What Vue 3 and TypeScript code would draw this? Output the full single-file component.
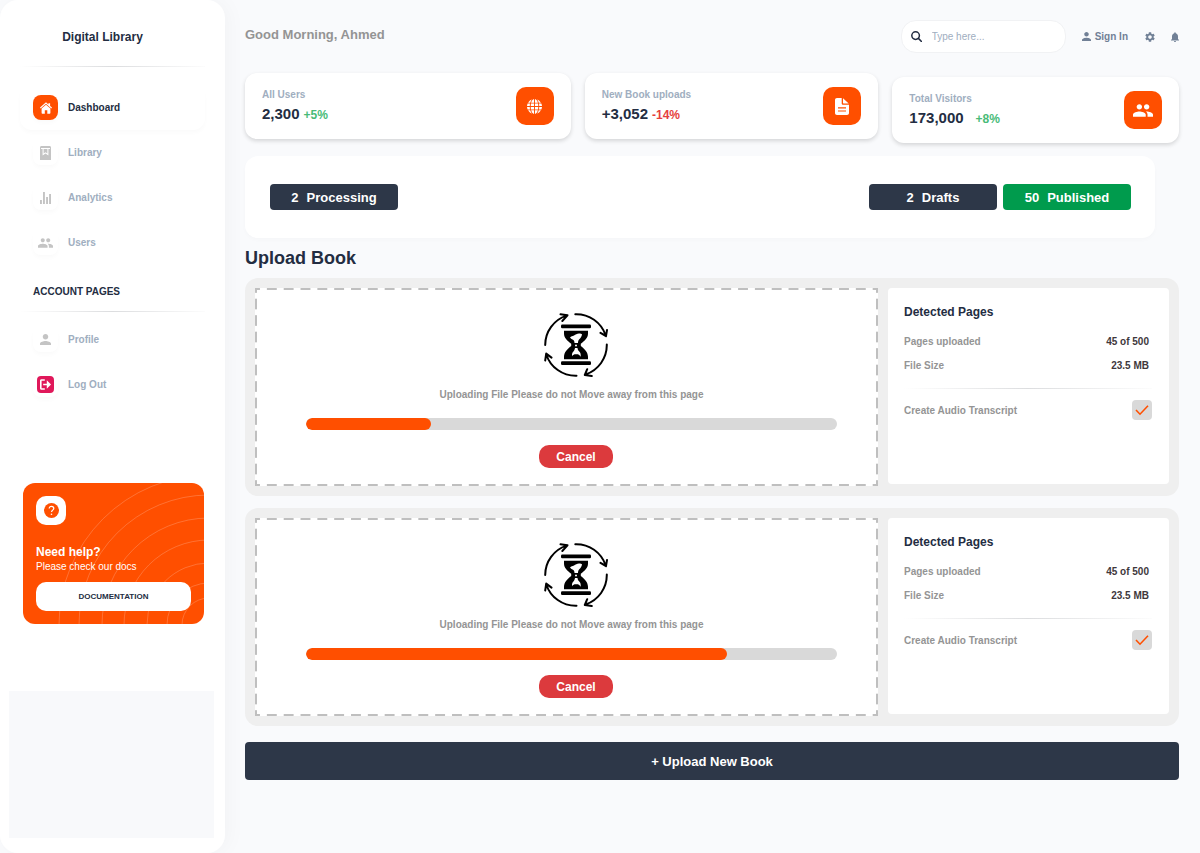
<script setup lang="ts">
import { reactive } from 'vue'

interface Icon { box: string; d: string; w: number; h: number }
interface NavItem { label: string; icon: Icon; active?: boolean; tone?: string }
interface Stat { label: string; value: string; delta: string; up: boolean; spaced?: boolean; icon: Icon }
interface Upload { id: number; percent: number; pages: string; size: string; audio: boolean }

const groupPath =
  'M16 11c1.66 0 2.99-1.34 2.99-3S17.66 5 16 5s-3 1.34-3 3 1.34 3 3 3zM8 11c1.66 0 2.99-1.34 2.99-3S9.66 5 8 5 5 6.34 5 8s1.34 3 3 3zM8 13c-2.33 0-7 1.17-7 3.5V19h14v-2.5C15 14.17 10.33 13 8 13zM16 13c-.29 0-.62.02-.97.05 1.16.84 1.97 1.97 1.97 3.45V19h6v-2.5c0-2.33-4.67-3.5-7-3.5z'
const personPath =
  'M12 12c2.21 0 4-1.79 4-4s-1.79-4-4-4-4 1.79-4 4 1.79 4 4 4zM12 14c-2.67 0-8 1.34-8 4v2h16v-2c0-2.66-5.33-4-8-4z'

const icons = {
  home: {
    box: '0 0 12 12', w: 12, h: 12,
    d: 'M6 .2 8.4 2.4V1.2h1.7v2.7L12 5.6l-.7.8L6 1.7.7 6.4 0 5.6zM6 2.7l4.4 3.9v4.1c0 .6-.4 1-1 1H7.3V8.3H4.8v3.4H2.6c-.6 0-1-.4-1-1V6.6z',
  },
  book: {
    box: '0 0 11 14', w: 11, h: 14,
    d: 'M1.5 0h8C10.400 0 11 .6 11 1.500V14H0V1.500C0 .6.6 0 1.500 0zM1 2v1h9V2zM2.600 3v6.400l2.900-2 2.900 2V3h-1v4.600L5.500 6.200 3.600 7.600V3z',
  },
  chart: {
    box: '0 0 11 12', w: 11, h: 12,
    d: 'M0 8h1.900v4H0zM3 0h1.900v12H3zM6.100 5H8v7H6.100zM9.100 2H11v10H9.100z',
  },
  group: { box: '1 5 22 14', w: 15, h: 10, d: groupPath },
  groupLarge: { box: '1 5 22 14', w: 20, h: 13, d: groupPath },
  person: { box: '4 4 16 16', w: 11, h: 11, d: personPath },
  personSmall: { box: '4 4 16 16', w: 9, h: 9, d: personPath },
  logout: {
    box: '0 0 17 17', w: 17, h: 17,
    d: 'M4 0h9a4 4 0 0 1 4 4v9a4 4 0 0 1-4 4H4a4 4 0 0 1-4-4V4a4 4 0 0 1 4-4zM4.500 3.300C3.600 3.300 3 3.900 3 4.800v7.400c0 .9.600 1.500 1.500 1.500h3.300v-1.500H4.600V4.800h3.200V3.300zM9.800 4.300v3.400H6.200v1.600h3.600v3.400l4.200-4.200z',
  },
  globe: {
    box: '0 0 16 16', w: 15, h: 15,
    d: 'M7.500 0C6 .4 5 1.900 4.400 3.900h3.100zM8.500 0v3.900h3.100C11 1.900 10 .4 8.500 0zM5.200.5C3.500 1.100 2.100 2.300 1.200 3.900h2.200C3.800 2.500 4.400 1.300 5.200.5zM10.800.5c.8.800 1.400 2 1.800 3.400h2.200C13.900 2.300 12.500 1.100 10.800.5zM.7 4.900C.3 5.700.1 6.600 0 7.500h3c0-.9.100-1.800.2-2.600zM4.200 4.900C4.100 5.700 4 6.600 4 7.500h3.500V4.900zM8.500 4.900v2.600H12c0-.9-.1-1.800-.2-2.600zM12.800 4.900c.1.800.2 1.700.2 2.600h3c-.1-.9-.3-1.800-.7-2.600zM0 8.500c.1.900.3 1.800.7 2.600h2.500C3.100 10.300 3 9.400 3 8.500zM4 8.500c0 .9.100 1.800.2 2.600h3.300V8.500zM8.500 8.500v2.600h3.300c.1-.8.200-1.700.2-2.600zM13 8.500c0 .9-.1 1.800-.2 2.600h2.500c.4-.8.600-1.700.7-2.600zM1.200 12.100c.9 1.600 2.300 2.800 4 3.400-.8-.8-1.400-2-1.800-3.400zM4.400 12.100C5 14.100 6 15.600 7.500 16v-3.900zM8.500 12.100V16c1.500-.4 2.500-1.900 3.100-3.900zM12.600 12.100c-.4 1.400-1 2.600-1.800 3.400 1.700-.6 3.100-1.800 4-3.400z',
  },
  file: {
    box: '0 0 14 17', w: 14, h: 17,
    d: 'M2 0h4.700v5.200c0 1 .6 1.600 1.600 1.600H14V15c0 1.200-.8 2-2 2H2c-1.200 0-2-.8-2-2V2C0 .8.800 0 2 0zM8 .3 13.700 5.600H8.500C8.200 5.600 8 5.400 8 5.100zM3 9.300v1.100h8V9.300zM3 12.500v1.100h8v-1.100z',
  },
  gear: {
    box: '2 2 20 20', w: 10, h: 10,
    d: 'M19.140 12.940c.04-.3.060-.61.060-.94 0-.32-.02-.64-.07-.94l2.030-1.580c.18-.14.230-.41.120-.61l-1.920-3.320c-.12-.22-.37-.29-.59-.22l-2.390.96c-.5-.38-1.030-.7-1.620-.94l-.36-2.540c-.04-.24-.24-.41-.48-.41h-3.840c-.24 0-.43.17-.47.41l-.36 2.540c-.59.24-1.130.57-1.620.94l-2.390-.96c-.22-.08-.47 0-.59.22L2.740 8.870c-.12.21-.08.47.12.61l2.030 1.580c-.05.3-.09.63-.09.94s.02.64.07.94l-2.030 1.580c-.18.14-.23.41-.12.61l1.920 3.320c.12.22.37.29.59.22l2.390-.96c.5.38 1.030.7 1.620.94l.36 2.540c.05.24.24.41.48.41h3.840c.24 0 .44-.17.47-.41l.36-2.540c.59-.24 1.130-.56 1.620-.94l2.390.96c.22.08.47 0 .59-.22l1.920-3.320c.12-.22.070-.47-.12-.61zM12 15.600c-1.980 0-3.600-1.620-3.600-3.600s1.620-3.600 3.600-3.600 3.600 1.620 3.600 3.600-1.620 3.600-3.600 3.600z',
  },
  bell: {
    box: '4 2 16 20', w: 8, h: 10,
    d: 'M12 22c1.100 0 2-.9 2-2h-4c0 1.100.89 2 2 2zM18 16v-5c0-3.070-1.640-5.640-4.500-6.320V4c0-.83-.67-1.500-1.500-1.500s-1.500.67-1.500 1.500v.68C7.630 5.360 6 7.920 6 11v5l-2 2v1h16v-1z',
  },
} satisfies Record<string, Icon>

const mainNav: NavItem[] = [
  { label: 'Dashboard', icon: icons.home, active: true },
  { label: 'Library', icon: icons.book },
  { label: 'Analytics', icon: icons.chart },
  { label: 'Users', icon: icons.group },
]
const accountNav: NavItem[] = [
  { label: 'Profile', icon: icons.person },
  { label: 'Log Out', icon: icons.logout, tone: 'danger' },
]
const stats: Stat[] = [
  { label: 'All Users', value: '2,300', delta: '+5%', up: true, icon: icons.globe },
  { label: 'New Book uploads', value: '+3,052', delta: '-14%', up: false, icon: icons.file },
  { label: 'Total Visitors', value: '173,000', delta: '+8%', up: true, spaced: true, icon: icons.groupLarge },
]
const uploads = reactive<Upload[]>([
  { id: 1, percent: 23.6, pages: '45 of 500', size: '23.5 MB', audio: true },
  { id: 2, percent: 79.3, pages: '45 of 500', size: '23.5 MB', audio: true },
])
const rings = [150, 130, 107, 85, 62, 42, 27]
</script>

<template>
  <div class="app">
    <aside class="sidebar">
      <div class="brand">Digital Library</div>
      <hr class="rule" />
      <nav class="nav" aria-label="Main">
        <a v-for="n in mainNav" :key="n.label" href="#" class="nav-item" :class="{ active: n.active }">
          <span class="nav-icon">
            <svg :width="n.icon.w" :height="n.icon.h" :viewBox="n.icon.box" aria-hidden="true"><path :d="n.icon.d" /></svg>
          </span>
          {{ n.label }}
        </a>
      </nav>
      <h2 class="nav-heading">ACCOUNT PAGES</h2>
      <hr class="rule" />
      <nav class="nav account" aria-label="Account">
        <a v-for="n in accountNav" :key="n.label" href="#" class="nav-item" :class="n.tone">
          <span class="nav-icon">
            <svg :width="n.icon.w" :height="n.icon.h" :viewBox="n.icon.box" aria-hidden="true"><path :d="n.icon.d" /></svg>
          </span>
          {{ n.label }}
        </a>
      </nav>

      <section class="help">
        <svg class="rings" viewBox="0 0 181 141" preserveAspectRatio="xMaxYMax slice" aria-hidden="true">
          <circle v-for="r in rings" :key="r" cx="186" cy="142" :r="r" />
        </svg>
        <div class="help-body">
          <span class="help-icon">
            <svg width="15" height="15" viewBox="0 0 15 15" aria-hidden="true">
              <circle cx="7.5" cy="7.500" r="7.500" fill="#ff4f00" />
              <path d="M5.200 5.600C5.200 4.200 6.200 3.300 7.500 3.300s2.300.9 2.300 2.100c0 1.700-2.200 1.800-2.200 3.500" fill="none" stroke="#fff" stroke-width="1.200" />
              <circle cx="7.500" cy="11.200" r=".8" fill="#fff" />
            </svg>
          </span>
          <h3>Need help?</h3>
          <p>Please check our docs</p>
          <a href="#" class="docs">DOCUMENTATION</a>
        </div>
      </section>

      <div class="side-panel"></div>
    </aside>

    <main class="main">
      <header class="top">
        <h1 class="greeting">Good Morning, Ahmed</h1>
        <label class="search">
          <svg width="11" height="11" viewBox="0 0 11 11" aria-hidden="true">
            <circle cx="4.600" cy="4.600" r="3.800" /><path d="M7.400 7.400 10.500 10.500" />
          </svg>
          <input type="search" placeholder="Type here..." aria-label="Search" />
        </label>
        <a href="#" class="sign-in">
          <svg :width="icons.personSmall.w" :height="icons.personSmall.h" :viewBox="icons.personSmall.box" aria-hidden="true"><path :d="icons.personSmall.d" /></svg>
          Sign In
        </a>
        <button class="icon-button" type="button" aria-label="Settings">
          <svg :width="icons.gear.w" :height="icons.gear.h" :viewBox="icons.gear.box"><path :d="icons.gear.d" /></svg>
        </button>
        <button class="icon-button" type="button" aria-label="Notifications">
          <svg :width="icons.bell.w" :height="icons.bell.h" :viewBox="icons.bell.box"><path :d="icons.bell.d" /></svg>
        </button>
      </header>

      <section class="stats">
        <article v-for="s in stats" :key="s.label" class="stat" :class="{ spaced: s.spaced }">
          <div>
            <div class="stat-label">{{ s.label }}</div>
            <div class="stat-line">
              <span class="stat-value">{{ s.value }}</span>
              <span class="delta" :class="{ down: !s.up }">{{ s.delta }}</span>
            </div>
          </div>
          <span class="stat-icon">
            <svg :width="s.icon.w" :height="s.icon.h" :viewBox="s.icon.box" aria-hidden="true"><path :d="s.icon.d" /></svg>
          </span>
        </article>
      </section>

      <section class="status">
        <button type="button" class="pill"><span>2</span><span>Processing</span></button>
        <div class="status-group">
          <button type="button" class="pill"><span>2</span><span>Drafts</span></button>
          <button type="button" class="pill green"><span>50</span><span>Published</span></button>
        </div>
      </section>

      <h2 class="section-title">Upload Book</h2>

      <section class="uploads">
        <article v-for="u in uploads" :key="u.id" class="upload">
          <div class="drop">
            <svg class="hourglass" width="64" height="64" viewBox="0 0 64 64" aria-hidden="true">
              <g fill="none" stroke="#000" stroke-width="2" stroke-linecap="round" stroke-linejoin="round">
                <path d="M1.200 32A31 31 0 0 1 22.500 2.600M16.500 1.300 23.500 2.300 18.300 8" />
                <path d="M31.300 1.200A31 31 0 0 1 61.700 22.500M56.500 19.800 62 23.200 63 17" />
                <path d="M62.800 31.500A31 31 0 0 1 41.500 61.500M43.200 56.200 40.800 62 47.800 63" />
                <path d="M32.500 62.800A31 31 0 0 1 2.200 41.200M1.200 47.500 2.200 40.600 7.500 44.600" />
              </g>
              <rect x="17" y="11.500" width="30" height="3.800" rx="1.200" />
              <rect x="17" y="48.300" width="30" height="3.700" rx="1.200" />
              <path d="M20 17.700h24v2.800c0 4.600-3.600 7.500-7.200 10.200v2.300C40.400 35.700 44 39.300 44 43.800v2.400H20v-2.400c0-4.500 3.600-8.100 7.200-10.800v-2.300C23.600 28 20 25.100 20 20.500z" />
              <path d="M26 24.500c1-1.200 2.600-1.200 4-2 1.500-1 3-2 5-2 1.500 0 2.500.3 3 .8-.2 2.200-1.300 3.700-2.700 5-1 1-1.300 2.200-1.300 3.700h-3.500c0-1.800-.6-2.600-2-3.400-.9-.5-1.900-1.200-2.500-2.100zM31 35h2.500c.2 1.700.9 2.800 2.200 4 .8.800 1 1.800 1 3.400v1.400c-.8-1.200-1.600-2-2.700-2.500h-3.500c-1.100.5-1.700 1-2.400 2l-.1-1.500c.1-1.600.5-2.200 1.200-3 1-1.100 1.600-2.200 1.800-3.800z" fill="#fff" />
              <circle cx="32" cy="32.500" r="1" fill="#fff" />
            </svg>
            <div class="progress-area">
              <p>Uploading File Please do not Move away from this page</p>
              <div class="track" role="progressbar" aria-label="Upload progress" :aria-valuenow="u.percent" aria-valuemin="0" aria-valuemax="100">
                <div class="fill" :style="{ width: u.percent + '%' }"></div>
              </div>
            </div>
            <button type="button" class="cancel">Cancel</button>
          </div>
          <div class="details">
            <h3>Detected Pages</h3>
            <dl>
              <div><dt>Pages uploaded</dt><dd>{{ u.pages }}</dd></div>
              <div><dt>File Size</dt><dd>{{ u.size }}</dd></div>
            </dl>
            <hr class="rule" />
            <label class="check-row" :for="'audio-' + u.id">
              Create Audio Transcript
              <span class="check">
                <input :id="'audio-' + u.id" v-model="u.audio" type="checkbox" />
                <svg v-if="u.audio" width="20" height="20" viewBox="0 0 20 20" aria-hidden="true"><path d="M4 10 8 14.200 16 5.700" /></svg>
              </span>
            </label>
          </div>
        </article>
      </section>

      <button type="button" class="upload-new">+ Upload New Book</button>
    </main>
  </div>
</template>

<style>
body {
  margin: 0;
  background: #f9fafc;
}
</style>

<style scoped>
* {
  box-sizing: border-box;
}
.app {
  display: grid;
  grid-template-columns: 225px minmax(0, 1fr);
  min-height: 100vh;
  font-family: "Liberation Sans", Arial, Helvetica, sans-serif;
  font-size: 10px;
  font-weight: 700;
  color: #232d42;
}
h1, h2, h3, p, dl, dd {
  margin: 0;
}
a {
  color: inherit;
  text-decoration: none;
}
button {
  border: 0;
  padding: 0;
  font: inherit;
  cursor: pointer;
}
svg {
  display: block;
  flex: none;
}
path {
  fill-rule: evenodd;
}
.rule {
  height: 1px;
  width: 100%;
  margin: 0;
  border: 0;
  background: linear-gradient(90deg, rgba(224, 225, 226, 0), #dcdddf 50%, rgba(224, 225, 226, 0.1));
}

.sidebar {
  display: flex;
  flex-direction: column;
  padding: 24px 20px 15px;
  background: #fff;
  border-radius: 18px;
  box-shadow: 4px 0 20px rgba(0, 0, 0, 0.03);
}
.brand {
  padding-right: 20px;
  margin-bottom: 16px;
  font-size: 12px;
  line-height: 26px;
  text-align: center;
}
.nav {
  display: flex;
  flex-direction: column;
  padding-top: 18px;
}
.nav.account {
  padding-top: 5px;
}
.nav-item {
  display: flex;
  align-items: center;
  gap: 10px;
  height: 45px;
  padding-left: 13px;
  border-radius: 12px;
  color: #a0aec0;
}
.nav-item.active {
  color: #232d42;
  box-shadow: 0 3px 4px rgba(0, 0, 0, 0.02);
}
.nav-icon {
  display: grid;
  place-items: center;
  width: 25px;
  height: 25px;
  border-radius: 8px;
  color: #c4c4c4;
  box-shadow: 0 3px 4px rgba(0, 0, 0, 0.02);
}
.nav-icon path, .stat-icon path, .sign-in path, .icon-button path {
  fill: currentColor;
}
.active .nav-icon {
  background: #ff4f00;
  color: #fff;
}
.danger .nav-icon {
  color: #e0185a;
}
.nav-heading {
  margin: 17px 0 9px;
  padding-left: 13px;
  font-size: 10px;
  line-height: 20px;
}
.help {
  position: relative;
  margin: 76px 1px 67px 3px;
  overflow: hidden;
  border-radius: 12px;
  background: #ff4f00;
  color: #fff;
}
.rings {
  position: absolute;
  inset: 0;
  width: 100%;
  height: 100%;
  fill: none;
  stroke: rgba(255, 255, 255, 0.2);
}
.help-body {
  position: relative;
  padding: 13px;
}
.help-icon {
  display: grid;
  place-items: center;
  width: 30px;
  height: 29px;
  margin-bottom: 19px;
  border-radius: 10px;
  background: #fff;
}
.help h3 {
  font-size: 12px;
  line-height: 16px;
}
.help p {
  font-weight: 400;
  line-height: 14px;
}
.docs {
  display: block;
  margin-top: 8px;
  border-radius: 10px;
  background: #fff;
  color: #232d42;
  font-size: 8px;
  line-height: 29px;
  text-align: center;
}
.side-panel {
  flex: 1;
  min-height: 147px;
  margin: 0 -9px 0 -11px;
  background: #f8f9fb;
}

.main {
  display: flex;
  flex-direction: column;
  padding: 20px 21px 20px 20px;
}
.top {
  display: flex;
  align-items: center;
  height: 33px;
  margin-bottom: 20px;
  color: #718096;
}
.greeting {
  flex: 1;
  align-self: flex-start;
  font-size: 13px;
  line-height: 30px;
  color: #949494;
}
.search {
  display: flex;
  align-items: center;
  gap: 10px;
  width: 165px;
  height: 33px;
  margin-right: 16px;
  padding: 0 9px;
  border: 1px solid #f1f2f4;
  border-radius: 15px;
  background: #fff;
}
.search svg {
  fill: none;
  stroke: #232d42;
  stroke-width: 1.5;
  stroke-linecap: round;
}
.search input {
  width: 100%;
  min-width: 0;
  padding: 0;
  border: 0;
  outline: 0;
  background: none;
  font: 400 10px "Liberation Sans", Arial, sans-serif;
  color: #232d42;
}
.search input::placeholder {
  color: #a0aec0;
}
.sign-in {
  display: flex;
  align-items: center;
  gap: 4px;
  margin-right: 17px;
}
.icon-button {
  background: none;
  color: inherit;
}
.icon-button + .icon-button {
  margin-left: 16px;
}

.stats {
  display: grid;
  grid-template-columns: 325fr 293fr 286fr;
  gap: 14px;
  min-height: 70px;
}
.stat {
  display: flex;
  justify-content: space-between;
  align-items: center;
  height: 66px;
  padding: 0 17px;
  border-radius: 12px;
  background: #fff;
  box-shadow: 0 2px 4px rgba(0, 0, 0, 0.15);
}
.stat.spaced {
  align-self: end;
}
.stat-label {
  line-height: 16px;
  color: #a0aec0;
}
.stat-line {
  display: flex;
  align-items: baseline;
  gap: 4px;
  line-height: 22px;
}
.spaced .stat-line {
  gap: 12px;
}
.stat-value {
  font-size: 15px;
}
.delta {
  font-size: 12px;
  color: #48bb78;
}
.delta.down {
  color: #e53e3e;
}
.stat-icon {
  display: grid;
  place-items: center;
  width: 38px;
  height: 38px;
  border-radius: 10px;
  background: #ff4f00;
  color: #fff;
}

.status {
  display: flex;
  justify-content: space-between;
  align-items: center;
  height: 82px;
  margin: 13px 24px 0 0;
  padding: 0 24px 0 25px;
  border-radius: 13px;
  background: #fff;
  box-shadow: 0 2px 4px rgba(0, 0, 0, 0.02);
}
.status-group {
  display: flex;
  gap: 6px;
}
.pill {
  display: flex;
  justify-content: center;
  align-items: center;
  gap: 8px;
  width: 128px;
  height: 26px;
  border-radius: 4px;
  background: #2d3748;
  color: #fff;
  font-size: 13px;
}
.pill.green {
  background: #009b4d;
}
.section-title {
  font-size: 18px;
  line-height: 40px;
}

.uploads {
  display: grid;
  gap: 12px;
}
.upload {
  display: grid;
  grid-template-columns: 623fr 281fr;
  gap: 10px;
  padding: 10px;
  border-radius: 13px;
  background: #efefef;
}
.drop {
  display: flex;
  flex-direction: column;
  align-items: center;
  padding: 25px 32px 18px 51px;
  background:
    linear-gradient(90deg, #bfbfbf 5px, transparent 5px 12px, #bfbfbf 12px) 0 0 / 17px 2px round no-repeat,
    linear-gradient(90deg, #bfbfbf 5px, transparent 5px 12px, #bfbfbf 12px) 0 100% / 17px 2px round no-repeat,
    linear-gradient(#bfbfbf 5px, transparent 5px 11px, #bfbfbf 11px) 0 0 / 2px 16px no-repeat round,
    linear-gradient(#bfbfbf 5px, transparent 5px 11px, #bfbfbf 11px) 100% 0 / 2px 16px no-repeat round,
    #fff;
}
.progress-area {
  width: 100%;
  padding-right: 9px;
}
.progress-area p {
  margin: 10px 0 15px;
  line-height: 16px;
  text-align: center;
  color: #949494;
}
.track {
  height: 12px;
  overflow: hidden;
  border-radius: 6px;
  background: #d9d9d9;
}
.fill {
  height: 100%;
  border-radius: 6px;
  background: #ff4f00;
}
.cancel {
  width: 74px;
  height: 23px;
  margin-top: 15px;
  border-radius: 10px;
  background: #dc3a3d;
  color: #fff;
  font-size: 12px;
}
.details {
  margin-bottom: 2px;
  padding: 14px 17px 14px 16px;
  border-radius: 4px;
  background: #fff;
  color: #949494;
}
.details h3 {
  margin-bottom: 8px;
  font-size: 12px;
  line-height: 20px;
  color: #232d42;
}
.details dl {
  padding-right: 3px;
  margin-bottom: 10px;
}
.details dl div {
  display: flex;
  justify-content: space-between;
  line-height: 24px;
}
.details dd {
  color: #40383c;
}
.check-row {
  display: flex;
  justify-content: space-between;
  align-items: center;
  margin-top: 11px;
}
.check {
  position: relative;
  width: 20px;
  height: 20px;
}
.check input {
  display: block;
  appearance: none;
  width: 20px;
  height: 20px;
  margin: 0;
  border-radius: 4px;
  background: #d9d9d9;
}
.check svg {
  position: absolute;
  inset: 0;
  pointer-events: none;
  fill: none;
  stroke: #ff4f00;
  stroke-width: 1.6;
}
.upload-new {
  height: 38px;
  margin-top: 16px;
  border-radius: 4px;
  background: #2d3748;
  color: #fff;
  font-size: 13px;
}
</style>
